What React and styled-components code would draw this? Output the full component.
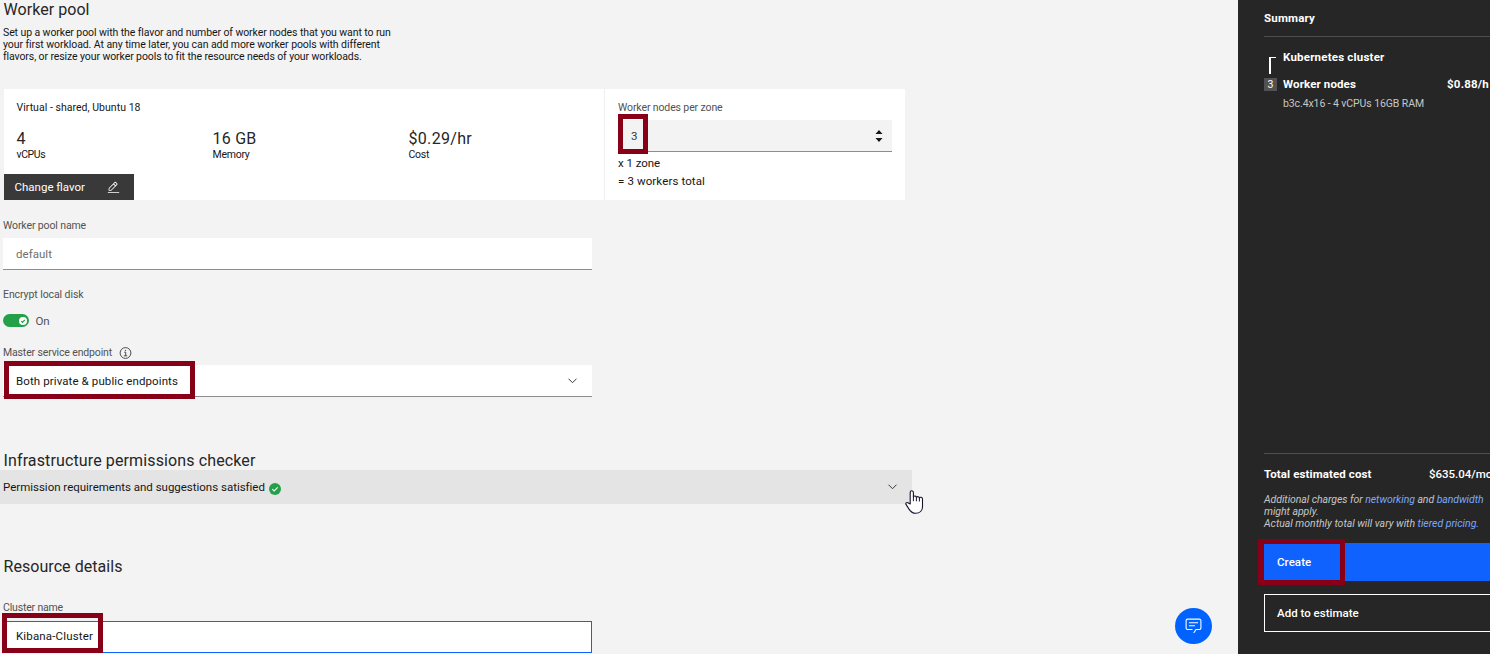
import React from "react";
import styled, { createGlobalStyle } from "styled-components";

const Global = createGlobalStyle`
  *, *::before, *::after { box-sizing: border-box; }
  body { margin: 0; overflow: hidden; font-family: Roboto, "Liberation Sans", sans-serif; color: #161616; }
  svg { display: block; flex: none; }
`;

const Page = styled.div`
  position: relative;
  display: flex;
  width: 1490px;
  height: 654px;
  overflow: hidden;
  background: #f3f3f3;
`;
const Main = styled.main`
  flex: 1;
  min-width: 0;
`;
const Section = styled.section`
  padding-left: 3px;
  margin-top: ${(p) => p.$top || 0}px;
`;
const Text = styled.span`
  display: block;
  font-size: ${(p) => p.$size || 11.5}px;
  font-weight: ${(p) => p.$weight || 400};
  letter-spacing: ${(p) => p.$track || 0}px;
  color: ${(p) => p.$color || "inherit"};
  white-space: pre;
`;
const Heading = styled.h2`
  margin: 0;
  padding-left: 0.5px;
  height: ${(p) => p.$height || 20}px;
  font-size: 16px;
  line-height: 20px;
  font-weight: 400;
  color: #262626;
  letter-spacing: ${(p) => p.$track}px;
  white-space: nowrap;
`;
const Description = styled.p`
  display: flex;
  flex-direction: column;
  margin: 7px 0 0;
  line-height: 12px;
`;

const Card = styled.div`
  display: flex;
  width: 901px;
  height: 111px;
  margin: 26px 0 0 1px;
  background: #fff;
`;
const Flavor = styled.div`
  display: flex;
  flex-direction: column;
  align-items: flex-start;
  width: 600px;
  padding-top: 10px;
`;
const FlavorTitle = styled.div`
  padding-left: 12.5px;
  line-height: 18px;
  height: 18px;
`;
const Stats = styled.div`
  display: grid;
  grid-template-columns: repeat(3, 196px);
  margin: 12px 0 13px;
  padding-left: 12.5px;
`;
const Stat = styled.div`
  display: flex;
  flex-direction: column;
  line-height: 12px;
`;
const StatValue = styled.span`
  height: 20px;
  font-size: 16px;
  line-height: 20px;
  color: #262626;
  letter-spacing: ${(p) => p.$track}px;
`;
const FlavorButton = styled.button`
  display: flex;
  align-items: center;
  justify-content: space-between;
  width: 130px;
  height: 26px;
  padding: 0 14px 0 10.5px;
  border: 0;
  background: #393939;
  color: #fff;
  font-family: inherit;
`;
const Zone = styled.div`
  width: 301px;
  border-left: 1px solid #f0f0f0;
  padding: 12px 13px 0;
  line-height: 18px;
`;
const ZoneTotals = styled.div`
  display: grid;
  grid-auto-rows: 18px;
  margin-top: 2px;
`;

const Label = styled.div`
  display: flex;
  align-items: center;
  gap: 7px;
  height: 14px;
  line-height: 14px;
  margin-bottom: ${(p) => p.$gap ?? 5}px;
`;
const Field = styled.div`
  position: relative;
  display: flex;
  align-items: center;
  justify-content: space-between;
  width: ${(p) => p.$width || 589}px;
  height: 32px;
  padding: 0 ${(p) => p.$right || 14}px 0 13px;
  background: ${(p) => p.$bg || "#fff"};
  border-bottom: 1px solid #8d8d8d;
`;
const FocusedField = styled(Field)`
  border: 1px solid #0f62fe;
  padding-left: 12px;
  padding-bottom: 2px;
`;
const Marker = styled.div`
  position: absolute;
  left: ${(p) => p.$x}px;
  top: ${(p) => p.$y}px;
  width: ${(p) => p.$w}px;
  height: ${(p) => p.$h}px;
  border: 5px solid #870018;
  border-left-width: ${(p) => p.$left || 5}px;
  pointer-events: none;
`;
const ToggleRow = styled.div`
  display: flex;
  align-items: center;
  gap: 6.5px;
  height: 16px;
`;
const Toggle = styled.div`
  display: flex;
  align-items: center;
  justify-content: flex-end;
  width: 26px;
  height: 13px;
  margin-bottom: 1px;
  padding-right: 2px;
  border-radius: 7px;
  background: #24a148;
`;
const Accordion = styled.div`
  position: relative;
  display: flex;
  align-items: center;
  width: 912px;
  height: 34px;
  padding: 0 14px 0 3px;
  background: #e4e4e4;
`;
const AccordionTitle = styled.div`
  display: flex;
  flex: 1;
  align-items: center;
  gap: 4px;

  svg { margin-top: 3px; }
`;
const Pointer = styled.svg`
  position: absolute;
  left: 905px;
  top: 20px;
`;
const ChatButton = styled.button`
  position: absolute;
  left: 1175px;
  top: 608px;
  display: grid;
  place-items: center;
  width: 37px;
  height: 36px;
  padding: 0;
  border: 0;
  border-radius: 50%;
  background: #0062ff;
`;

const Sidebar = styled.aside`
  display: flex;
  flex-direction: column;
  width: 252px;
  padding-left: 26px;
  background: #262626;
  color: #fff;
  overflow: hidden;
`;
const SummaryTitle = styled.div`
  height: 37px;
  line-height: 36px;
  border-bottom: 1px solid #4f4f4f;
`;
const Item = styled.div`
  display: flex;
  align-items: center;
  height: ${(p) => p.$height}px;
`;
const WorkerItem = styled(Item)`
  line-height: 13px;
  padding-bottom: 1px;
`;
const Gutter = styled.div`
  display: flex;
  flex: none;
  width: 19px;
`;
const Bracket = styled.div`
  width: 7px;
  height: 17px;
  margin: 17px 0 0 5px;
  border: solid #fff;
  border-width: 1px 0 0 2px;
`;
const Badge = styled.div`
  display: grid;
  place-items: center;
  width: 13px;
  height: 13px;
  background: #525252;
  line-height: 13px;
`;
const Price = styled.div`
  flex: none;
  width: ${(p) => p.$width}px;
  margin-left: auto;
  white-space: nowrap;
`;
const Totals = styled.div`
  margin-top: auto;
  border-top: 1px solid #4f4f4f;
`;
const Notes = styled.div`
  height: 36px;
  margin-bottom: 13px;
  line-height: 12px;
  font-style: italic;
`;
const Link = styled.a`
  color: #78a9ff;
`;
const Action = styled.button`
  position: relative;
  display: flex;
  align-items: center;
  width: 240px;
  height: 38px;
  padding: 0 12px;
  border: 1px solid ${(p) => (p.$primary ? "#0f62fe" : "#fff")};
  background: ${(p) => (p.$primary ? "#0f62fe" : "transparent")};
  color: #fff;
  font-family: inherit;
  margin-bottom: ${(p) => (p.$primary ? 13 : 22)}px;
`;

const Chevron = () => (
  <svg width="11" height="8" viewBox="0 0 11 8" fill="none" stroke="#393939" strokeWidth="1">
    <path d="M1.5 1.7 5.5 5.7 9.5 1.7" />
  </svg>
);
const Pencil = () => (
  <svg width="13" height="13" viewBox="0 0 32 32" fill="#fff">
    <path d="M2 27h28v2H2zM25.4 9c.8-.8.8-2 0-2.8l-3.6-3.6c-.8-.8-2-.8-2.8 0l-15 15V24h6.4zm-5-5L24 7.6l-3 3L17.4 7zM6 22v-3.6l10-10 3.6 3.6-10 10z" />
  </svg>
);
const Info = () => (
  <svg width="13" height="12" viewBox="-.5 0 13 12" fill="none" stroke="#393939">
    <circle cx="6" cy="6" r="5.4" strokeWidth=".9" />
    <path d="M4.7 5.2H6.2V8.7M4.4 8.8H7.7" strokeWidth=".9" />
    <circle cx="6" cy="3.3" r=".65" fill="#393939" stroke="none" />
  </svg>
);
const Check = ({ size, bg, fg, weight = 1.1 }) => (
  <svg width={size} height={size} viewBox="0 0 12 12" fill="none">
    <circle cx="6" cy="6" r="6" fill={bg} />
    <path d="M3.3 6.2 5.2 8 8.7 4.4" stroke={fg} strokeWidth={weight} />
  </svg>
);
const Stepper = () => (
  <svg width="8" height="14" viewBox="0 0 8 14" fill="#161616">
    <path d="M.5 5 4 1l3.5 4zM.5 9 4 13l3.5-4z" />
  </svg>
);

export default function App() {
  const small = 10.5;
  const muted = "#525252";
  const note = "#c6c6c6";
  return (
    <Page>
      <Global />
      <Main>
        <Section>
          <Heading $track={0.05}>Worker pool</Heading>
          <Description>
            <Text $size={small} $track={-0.094}>Set up a worker pool with the flavor and number of worker nodes that you want to run</Text>
            <Text $size={small} $track={-0.072}>your first workload. At any time later, you can add more worker pools with different</Text>
            <Text $size={small} $track={-0.098}>flavors, or resize your worker pools to fit the resource needs of your workloads.</Text>
          </Description>
          <Card>
            <Flavor>
              <FlavorTitle><Text $size={small} $track={0.033}>Virtual - shared, Ubuntu 18</Text></FlavorTitle>
              <Stats>
                <Stat><StatValue>4</StatValue><Text $size={small} $track={-0.4}>vCPUs</Text></Stat>
                <Stat><StatValue $track={0.236}>16 GB</StatValue><Text $size={small} $track={-0.258}>Memory</Text></Stat>
                <Stat><StatValue $track={0.31}>$0.29/hr</StatValue><Text $size={small} $track={-0.25}>Cost</Text></Stat>
              </Stats>
              <FlavorButton><Text>Change flavor</Text><Pencil /></FlavorButton>
            </Flavor>
            <Zone>
              <Label $gap={5}><Text $size={small} $track={-0.122} $color={muted}>Worker nodes per zone</Text></Label>
              <Field $width={274} $right={9} $bg="#f3f3f3">
                <Text $color="#393939">3</Text>
                <Stepper />
                <Marker $x={0} $y={-6} $w={30} $h={40} />
              </Field>
              <ZoneTotals>
                <Text $track={-0.062}>x 1 zone</Text>
                <Text $track={0.112}>= 3 workers total</Text>
              </ZoneTotals>
            </Zone>
          </Card>
        </Section>

        <Section $top={19}>
          <Label><Text $size={small} $track={-0.123} $color={muted}>Worker pool name</Text></Label>
          <Field><Text $track={0.038} $color="#6f6f6f">default</Text></Field>
        </Section>

        <Section $top={18}>
          <Label $gap={11}><Text $size={small} $track={-0.08} $color={muted}>Encrypt local disk</Text></Label>
          <ToggleRow>
            <Toggle><Check size={8} bg="#fff" fg="#24a148" weight={1.9} /></Toggle>
            <Text $track={-0.13} $color={muted}>On</Text>
          </ToggleRow>
        </Section>

        <Section $top={17}>
          <Label $gap={5}><Text $size={small} $track={-0.146} $color={muted}>Master service endpoint</Text><Info /></Label>
          <Field>
            <Text $track={0.103}>Both private &amp; public endpoints</Text>
            <Chevron />
            <Marker $x={1} $y={-4} $w={191} $h={38} />
          </Field>
        </Section>

        <Section $top={54}>
          <Heading $height={19} $track={0.125}>Infrastructure permissions checker</Heading>
        </Section>
        <Accordion>
          <AccordionTitle>
            <Text $track={-0.012}>Permission requirements and suggestions satisfied</Text>
            <Check size={12} bg="#24a148" fg="#fff" />
          </AccordionTitle>
          <Chevron />
          <Pointer width="19" height="25" viewBox="0 0 19 25">
            <path
              d="M5.2 14V2.4a1.6 1.6 0 0 1 3.2 0v4.3a1.7 1.7 0 0 1 3 .6 1.7 1.7 0 0 1 3 .7 1.7 1.7 0 0 1 3.1.9v7.6c0 4-2.8 6.800-6.800 6.800-3.700 0-5.300-1.800-7-4.700L1 14.400c-.6-1.300.6-2.300 1.900-1.700z"
              fill="#fff" stroke="#15152b" strokeWidth="1.1" strokeLinejoin="round"
            />
            <path d="M8.4 6.5v4.7M11.4 7.3v4M14.4 8v3.5" stroke="#15152b" fill="none" />
          </Pointer>
        </Accordion>

        <Section $top={53}>
          <Heading $track={0.054}>Resource details</Heading>
        </Section>
        <Section $top={24}>
          <Label $gap={6}><Text $size={small} $track={-0.171} $color={muted}>Cluster name</Text></Label>
          <FocusedField>
            <Text $track={0.156}>Kibana-Cluster</Text>
            <Marker $x={-2} $y={-9} $w={101} $h={40} />
          </FocusedField>
        </Section>
      </Main>

      <Sidebar>
        <SummaryTitle><Text $weight={700} $track={0.186}>Summary</Text></SummaryTitle>
        <Item $height={40}>
          <Gutter><Bracket /></Gutter>
          <Text $weight={700} $track={0.209}>Kubernetes cluster</Text>
        </Item>
        <WorkerItem $height={15}>
          <Gutter><Badge><Text $size={10.5}>3</Text></Badge></Gutter>
          <Text $weight={700} $track={0.131}>Worker nodes</Text>
          <Price $width={43}><Text $weight={700} $track={0.224}>$0.88/h</Text></Price>
        </WorkerItem>
        <Item $height={23}>
          <Gutter />
          <Text $size={small} $track={-0.095} $color={note}>b3c.4x16 - 4 vCPUs 16GB RAM</Text>
        </Item>
        <Totals>
          <Item $height={40}>
            <Text $weight={700} $track={0.101}>Total estimated cost</Text>
            <Price $width={61}><Text $weight={500} $track={-0.03}>$635.04/mo</Text></Price>
          </Item>
          <Notes>
            <Text $size={small} $track={-0.061} $color={note}>Additional charges for <Link>networking</Link> and <Link>bandwidth</Link></Text>
            <Text $size={small} $track={-0.04} $color={note}>might apply.</Text>
            <Text $size={small} $track={-0.021} $color={note}>Actual monthly total will vary with <Link>tiered pricing.</Link></Text>
          </Notes>
          <Action $primary>
            <Text $weight={500} $track={0.08}>Create</Text>
            <Marker $x={-7} $y={-5} $w={87} $h={46} $left={6} />
          </Action>
          <Action><Text $weight={500} $track={0.01}>Add to estimate</Text></Action>
        </Totals>
      </Sidebar>
      <ChatButton aria-label="Chat">
        <svg width="17" height="16" viewBox="0 0 17 16" fill="none" stroke="#fff" strokeWidth="1.1">
          <path d="M7.5 11.5H2.6a1.5 1.5 0 0 1-1.5-1.5V2.6A1.5 1.5 0 0 1 2.6 1.1h11.8a1.5 1.5 0 0 1 1.5 1.5V10a1.5 1.5 0 0 1-1.5 1.5H11L8.7 15M4 4.7h9M4 7.8h6" />
        </svg>
      </ChatButton>
    </Page>
  );
}
